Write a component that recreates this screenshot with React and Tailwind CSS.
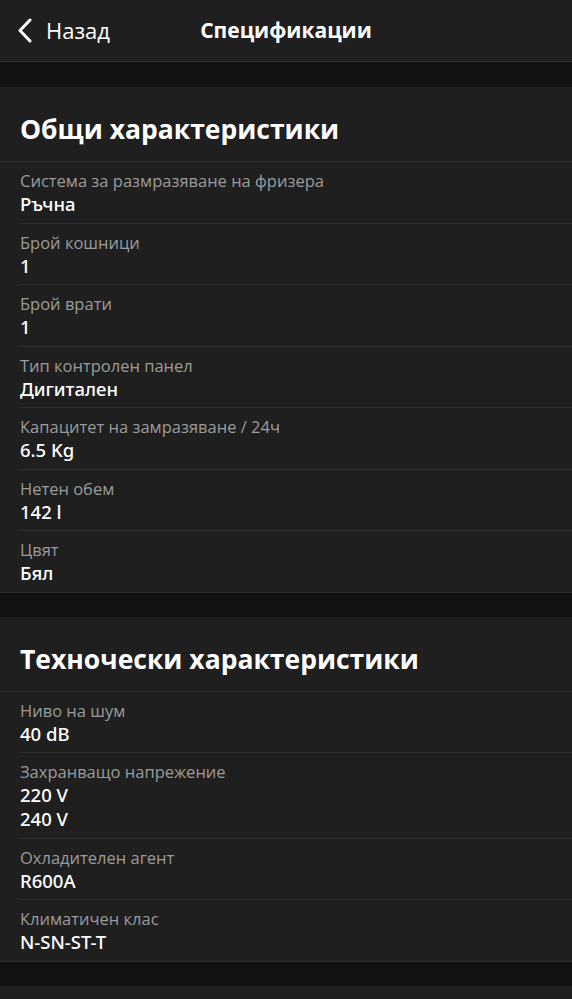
const sections = [
  {
    title: "Общи характеристики",
    rows: [
      { label: "Система за размразяване на фризера", values: ["Ръчна"] },
      { label: "Брой кошници", values: ["1"] },
      { label: "Брой врати", values: ["1"] },
      { label: "Тип контролен панел", values: ["Дигитален"] },
      { label: "Капацитет на замразяване / 24ч", values: ["6.5 Kg"] },
      { label: "Нетен обем", values: ["142 l"] },
      { label: "Цвят", values: ["Бял"] },
    ],
  },
  {
    title: "Техночески характеристики",
    rows: [
      { label: "Ниво на шум", values: ["40 dB"] },
      { label: "Захранващо напрежение", values: ["220 V", "240 V"] },
      { label: "Охладителен агент", values: ["R600A"] },
      { label: "Климатичен клас", values: ["N-SN-ST-T"] },
    ],
  },
];

const Section = ({ title, rows }) => (
  <div className="bg-[#1f1f1f] border-b border-[#2e2e2e]">
    <h2 className="h-[75px] flex items-end pb-[11px] px-[20px] text-[26.5px] font-bold text-white border-b border-[#2e2e2e]">
      {title}
    </h2>
    {rows.map((row, i) => (
      <div key={row.label} className="pl-[24px]">
        <div
          className={
            "pr-[20px] pt-[8px] pb-[6.5px] -ml-[4px] " +
            (i < rows.length - 1 ? "border-b border-[#2e2e2e]" : "")
          }
        >
          <div className="text-[16.5px] leading-[22px] text-[#9b9b9b]">{row.label}</div>
          {row.values.map((v) => (
            <div
              key={v}
              className="text-[18.5px] leading-[24px] font-medium text-white font-['Noto_Sans',sans-serif]"
            >
              {v}
            </div>
          ))}
        </div>
      </div>
    ))}
  </div>
);

export default function App() {
  return (
    <div
      className="min-h-[999px] bg-[#121212] text-white"
      style={{ fontFamily: '"Open Sans", "Noto Sans", sans-serif' }}
    >
      <header className="h-[62px] bg-[#1f1f1f] border-b border-[#2e2e2e] relative flex items-center">
        <button className="flex items-center pl-[17px] gap-[14px] text-white">
          <svg width="15" height="25" viewBox="0 0 15 25" fill="none">
            <path d="M13 2L3 12.5L13 23" stroke="white" strokeWidth="3" strokeLinecap="round" strokeLinejoin="round" />
          </svg>
          <span className="text-[22px] font-medium">Назад</span>
        </button>
        <h1 className="absolute left-0 right-0 text-center text-[21px] font-bold pointer-events-none">
          Спецификации
        </h1>
      </header>
      <div className="h-[25px]" />
      <Section {...sections[0]} />
      <div className="h-[24px]" />
      <Section {...sections[1]} />
      <div className="h-[24px]" />
      <div className="h-[20px] bg-[#1f1f1f]" />
    </div>
  );
}
